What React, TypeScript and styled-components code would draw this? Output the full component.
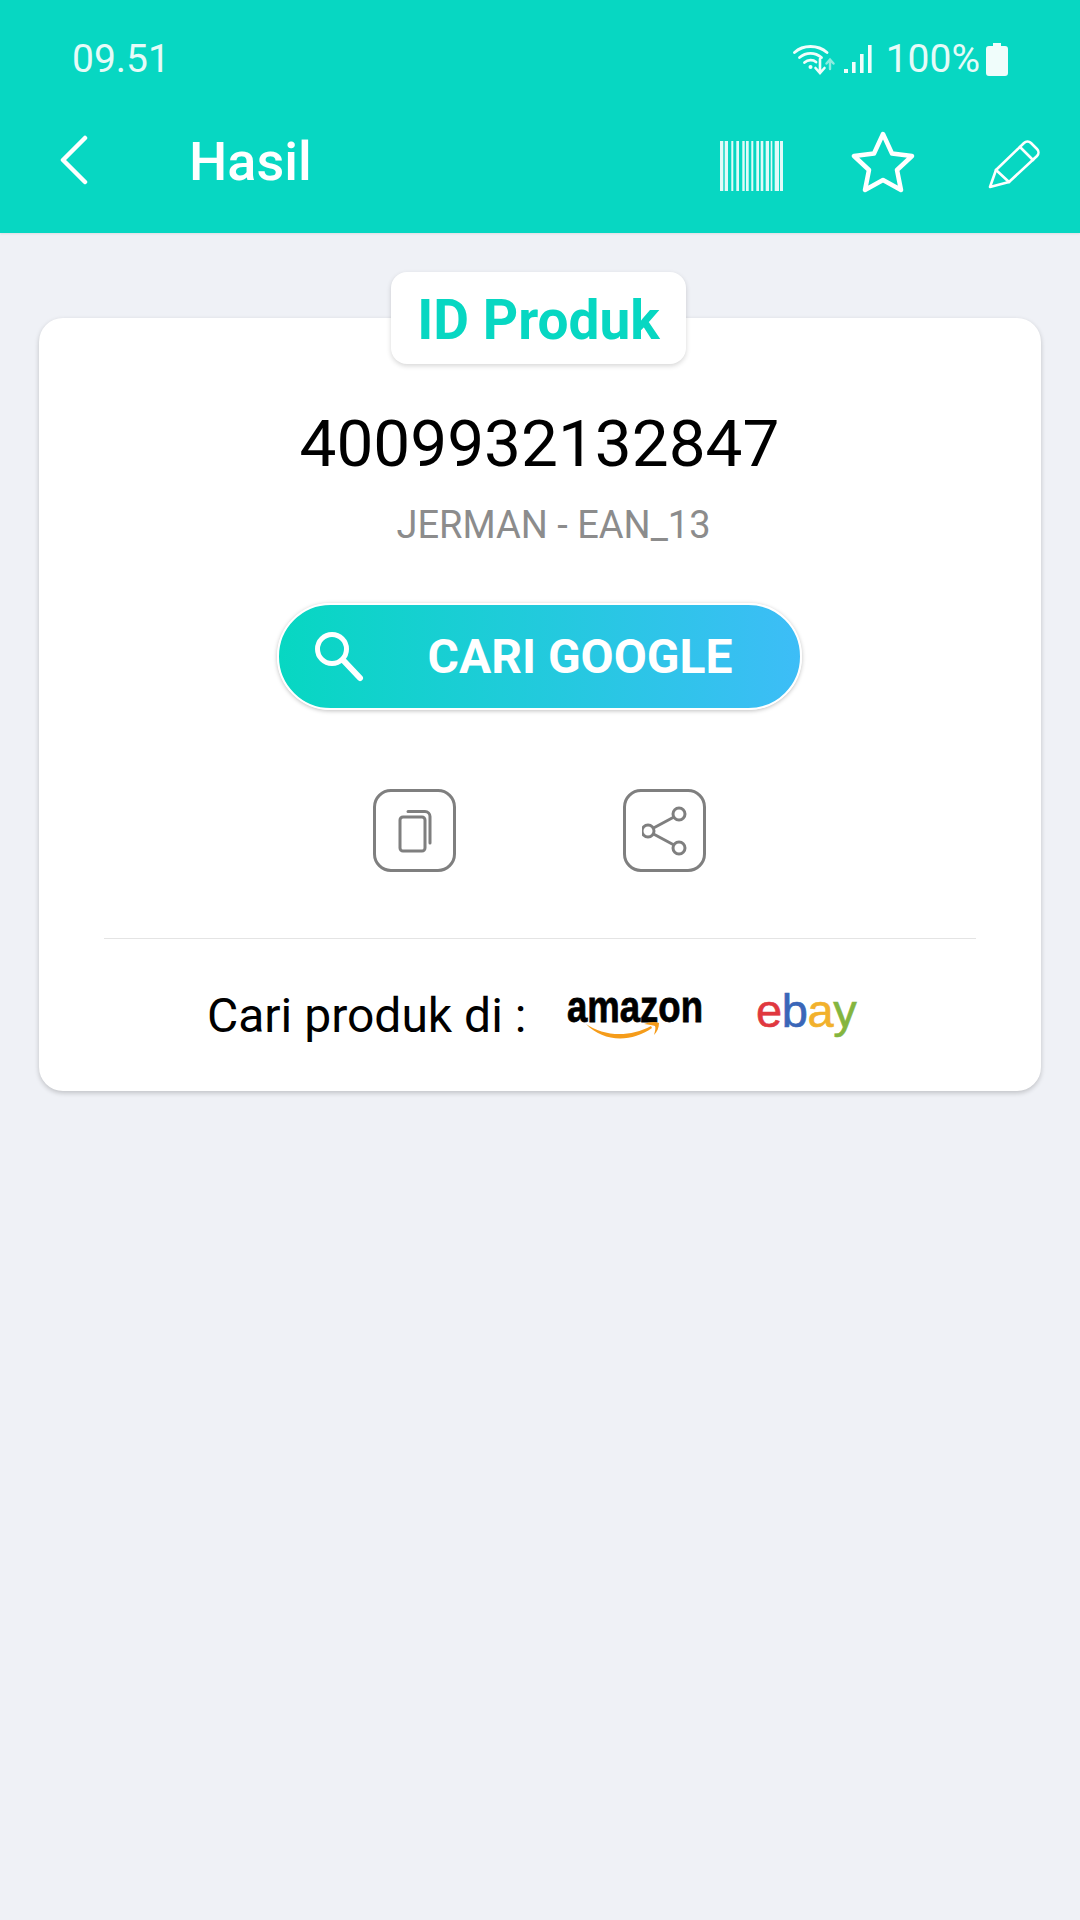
import React from "react";
import styled, { createGlobalStyle } from "styled-components";

const Global = createGlobalStyle`
  html, body { margin: 0; padding: 0; background: #eff1f6; }
  body { font-family: Roboto, "Noto Sans", sans-serif; }
  * { box-sizing: border-box; }
`;
const Page = styled.div`
  width: 1080px; height: 1920px; background: #eff1f6; overflow: hidden;
  display: flex; flex-direction: column;
`;
const Header = styled.header`
  height: 233px; background: #07d7c2; color: #fff; flex: none;
  display: flex; flex-direction: column;
  box-shadow: 0 1px 2px rgba(0,0,0,.08);
`;
const StatusBar = styled.div`
  height: 103px; padding: 37px 72px 0 72px;
  display: flex; justify-content: space-between; align-items: flex-start;
`;
const StatusText = styled.span`
  font-size: 39px; line-height: 44px; font-weight: 400; color: #e6fbf8;
`;
const StatusIcons = styled.div`
  display: flex; align-items: center; height: 44px;
`;
const Glyph = styled.svg<{ $top?: number; $right?: number; $left?: number }>`
  flex: none; display: block;
  margin-top: ${(p) => p.$top ?? 0}px;
  margin-right: ${(p) => p.$right ?? 0}px;
  margin-left: ${(p) => p.$left ?? 0}px;
`;
const Toolbar = styled.div`
  height: 115px; display: flex; align-items: center; padding: 0 40px 0 60px;
`;
const Title = styled.h1`
  margin: 2px 0 0 101px; flex: 1; font-size: 54px; line-height: 64px; font-weight: 500; color: #fff;
`;
const Content = styled.main`
  padding: 39px 39px 0;
  display: flex; flex-direction: column; align-items: stretch;
`;
const Card = styled.section`
  position: relative; margin-top: 46px; height: 773px; background: #fff; border-radius: 24px;
  box-shadow: 0 2px 5px rgba(0,0,0,.2);
  display: flex; flex-direction: column; align-items: center;
  padding-top: 87px;
`;
const Tag = styled.div`
  position: absolute; top: -46px; left: 352px; width: 295px; height: 92px;
  background: #fff; border-radius: 16px; box-shadow: 0 2px 5px rgba(0,0,0,.16);
  display: flex; align-items: center; justify-content: center; padding-top: 3px;
  font-size: 55px; font-weight: 700; color: #07d7c2;
`;
const Code = styled.div`
  font-size: 65.7px; line-height: 78px; color: #000; font-weight: 400; margin-right: 1px;
`;
const SubCode = styled.div`
  margin-top: 19px; font-size: 38px; line-height: 46px; color: #8c8c8c; margin-left: 27px;
`;
const SearchButton = styled.div`
  margin-top: 55px; margin-right: 2px; width: 525px; height: 107px; border-radius: 54px;
  border: 2px solid #fff; box-shadow: 0 1px 4px rgba(0,0,0,.25);
  background: linear-gradient(90deg, #07d7c2 0%, #3dbdf7 100%);
  color: #fff; display: flex; align-items: center; padding-left: 36px;
`;
const SearchLabel = styled.span`
  margin-left: 63px; font-size: 48px; font-weight: 700; line-height: 54px;
`;
const ActionRow = styled.div`
  margin-top: 79px; margin-right: 1px; display: flex; gap: 167px;
`;
const ActionBox = styled.div`
  width: 83px; height: 83px; border: 3px solid #7f7f7f; border-radius: 18px;
  display: flex; align-items: center; justify-content: center;
`;
const Divider = styled.div`
  margin-top: 66px; width: 872px; height: 1px; background: #e4e4e4;
`;
const ShopRow = styled.div`
  margin-top: 37px; display: flex; align-items: center; width: 872px; padding-left: 103px; height: 80px;
`;
const ShopLabel = styled.span`
  font-size: 48px; line-height: 56px; color: #000; width: 360px; flex: none;
`;

const barcodeBars: [number, number][] = [
  [0, 3.3], [4.7, 3.3], [11.3, 2], [16.3, 2.7], [22.3, 2.4], [26, 2.7], [31.3, 2],
  [36.3, 2.7], [40.7, 2.6], [45.7, 3.3], [50.7, 1.6], [54.7, 4.3], [60, 3],
];

export default function App() {
  return (
    <Page>
      <Global />
      <Header>
        <StatusBar>
          <StatusText>09.51</StatusText>
          <StatusIcons>
            <Glyph $right={8} width="42" height="32" viewBox="0 0 42 32" fill="none" stroke="#f0fdfb" strokeLinecap="round">
              <path d="M1.5 9.5C10 1.5 25 1.5 34 9.5" strokeWidth="2.8" />
              <path d="M6.5 14.5C13 9 22 9 28.5 14.5" strokeWidth="2.8" />
              <path d="M11.5 19.5C15 16.5 20 16.5 23 19" strokeWidth="2.8" />
              <circle cx="17.5" cy="24" r="2" fill="#f0fdfb" stroke="none" />
              <path d="M27 16v13M22.5 25l4.5 5 4.5-5" strokeWidth="2.6" />
              <path d="M37 26v-9M33.5 20.5l3.5-4 3.5 4" strokeWidth="2.4" stroke="#8fece0" />
            </Glyph>
            <Glyph $right={13} width="30" height="30" viewBox="0 0 30 30" fill="#f0fdfb">
              <rect x="1" y="25" width="4" height="4" />
              <rect x="9" y="18" width="3.6" height="11" />
              <rect x="17" y="10" width="3.6" height="19" />
              <rect x="25" y="1" width="3.6" height="28" />
            </Glyph>
            <StatusText>100%</StatusText>
            <Glyph $left={6} width="22" height="33" viewBox="0 0 22 33" fill="#f0fdfb">
              <path d="M7 0h8v3h4a3 3 0 0 1 3 3v24a3 3 0 0 1-3 3H3a3 3 0 0 1-3-3V6a3 3 0 0 1 3-3h4z" />
            </Glyph>
          </StatusIcons>
        </StatusBar>
        <Toolbar>
          <Glyph $top={-2} width="28" height="50" viewBox="0 0 28 50" fill="none" stroke="#fff" strokeWidth="4.5" strokeLinecap="round" strokeLinejoin="round">
            <path d="M25 3L3 25l22 22" />
          </Glyph>
          <Title>Hasil</Title>
          <Glyph $top={10} $right={67} width="64" height="50" viewBox="0 0 64 50" fill="#fff" fillOpacity="0.88">
            {barcodeBars.map(([x, w]) => (
              <rect key={x} x={x} width={w} height="50" />
            ))}
          </Glyph>
          <Glyph $top={2} $right={73} width="64" height="62" viewBox="0 0 64 62" fill="none" stroke="#fff" strokeWidth="4.5" strokeLinejoin="round">
            <path d="M32 3l9 19.5 20 2.5-15 14 4 20-18-10-18 10 4-20L3 25l20-2.5z" />
          </Glyph>
          <Glyph $top={8} width="52" height="50" viewBox="0 0 52 50" fill="none" stroke="#fff" strokeWidth="2.6" strokeLinejoin="round" strokeLinecap="round">
            <path d="M2 47l6-17L36 3a5 5 0 0 1 7 0l6 6a5 5 0 0 1 0 7L21 42z" />
            <path d="M8 30l13 12M32 7l13 13" />
          </Glyph>
        </Toolbar>
      </Header>
      <Content>
        <Card>
          <Tag>ID Produk</Tag>
          <Code>4009932132847</Code>
          <SubCode>JERMAN - EAN_13</SubCode>
          <SearchButton>
            <Glyph width="50" height="52" viewBox="0 0 50 52" fill="none" stroke="#fff" strokeLinecap="round">
              <circle cx="17" cy="18" r="14.5" strokeWidth="5" />
              <path d="M28 29l17 18" strokeWidth="6" />
            </Glyph>
            <SearchLabel>CARI GOOGLE</SearchLabel>
          </SearchButton>
          <ActionRow>
            <ActionBox>
              <Glyph width="36" height="44" viewBox="0 0 36 44" fill="none" stroke="#7f7f7f" strokeWidth="3" strokeLinejoin="round" strokeLinecap="round">
                <rect x="3" y="8" width="25" height="34" rx="3" />
                <path d="M11 2.5h17a5 5 0 0 1 5 5V34" />
              </Glyph>
            </ActionBox>
            <ActionBox>
              <Glyph width="46" height="50" viewBox="0 0 46 50" fill="none" stroke="#7f7f7f" strokeWidth="3">
                <circle cx="6" cy="25" r="6" /><circle cx="37" cy="8" r="6" /><circle cx="37" cy="42" r="6" />
                <path d="M11.5 22L32 11M11.5 28L32 39" />
              </Glyph>
            </ActionBox>
          </ActionRow>
          <Divider />
          <ShopRow>
            <ShopLabel>Cari produk di :</ShopLabel>
            <Glyph $top={1} $right={52} width="136" height="44" viewBox="0 0 136 44" overflow="visible">
              <text x="0" y="27" fontFamily="Liberation Sans, sans-serif" fontWeight="700" fontSize="44" textLength="136" lengthAdjust="spacingAndGlyphs" fill="#000" stroke="#000" strokeWidth="0.8">amazon</text>
              <path d="M19 29C36 41 62 43 84 31L85 33C64 48 36 47 19 29z" fill="#f59c1a" />
              <path d="M77 29C82 27 88 26 92 28C92 33 90 37 87 40C88 36 89 33 88 31C86 30 82 30 77 29z" fill="#f59c1a" />
            </Glyph>
            <Glyph $top={3} $left={1} width="100" height="44" viewBox="0 0 100 44" overflow="visible">
              <text y="31" fontFamily="Liberation Sans, sans-serif" fontSize="47" letterSpacing="-0.4" strokeWidth="0.6">
                <tspan fill="#e0383f" stroke="#e0383f">e</tspan>
                <tspan fill="#3a66b8" stroke="#3a66b8">b</tspan>
                <tspan fill="#f2b12c" stroke="#f2b12c">a</tspan>
                <tspan fill="#84b53f" stroke="#84b53f">y</tspan>
              </text>
            </Glyph>
          </ShopRow>
        </Card>
      </Content>
    </Page>
  );
}
